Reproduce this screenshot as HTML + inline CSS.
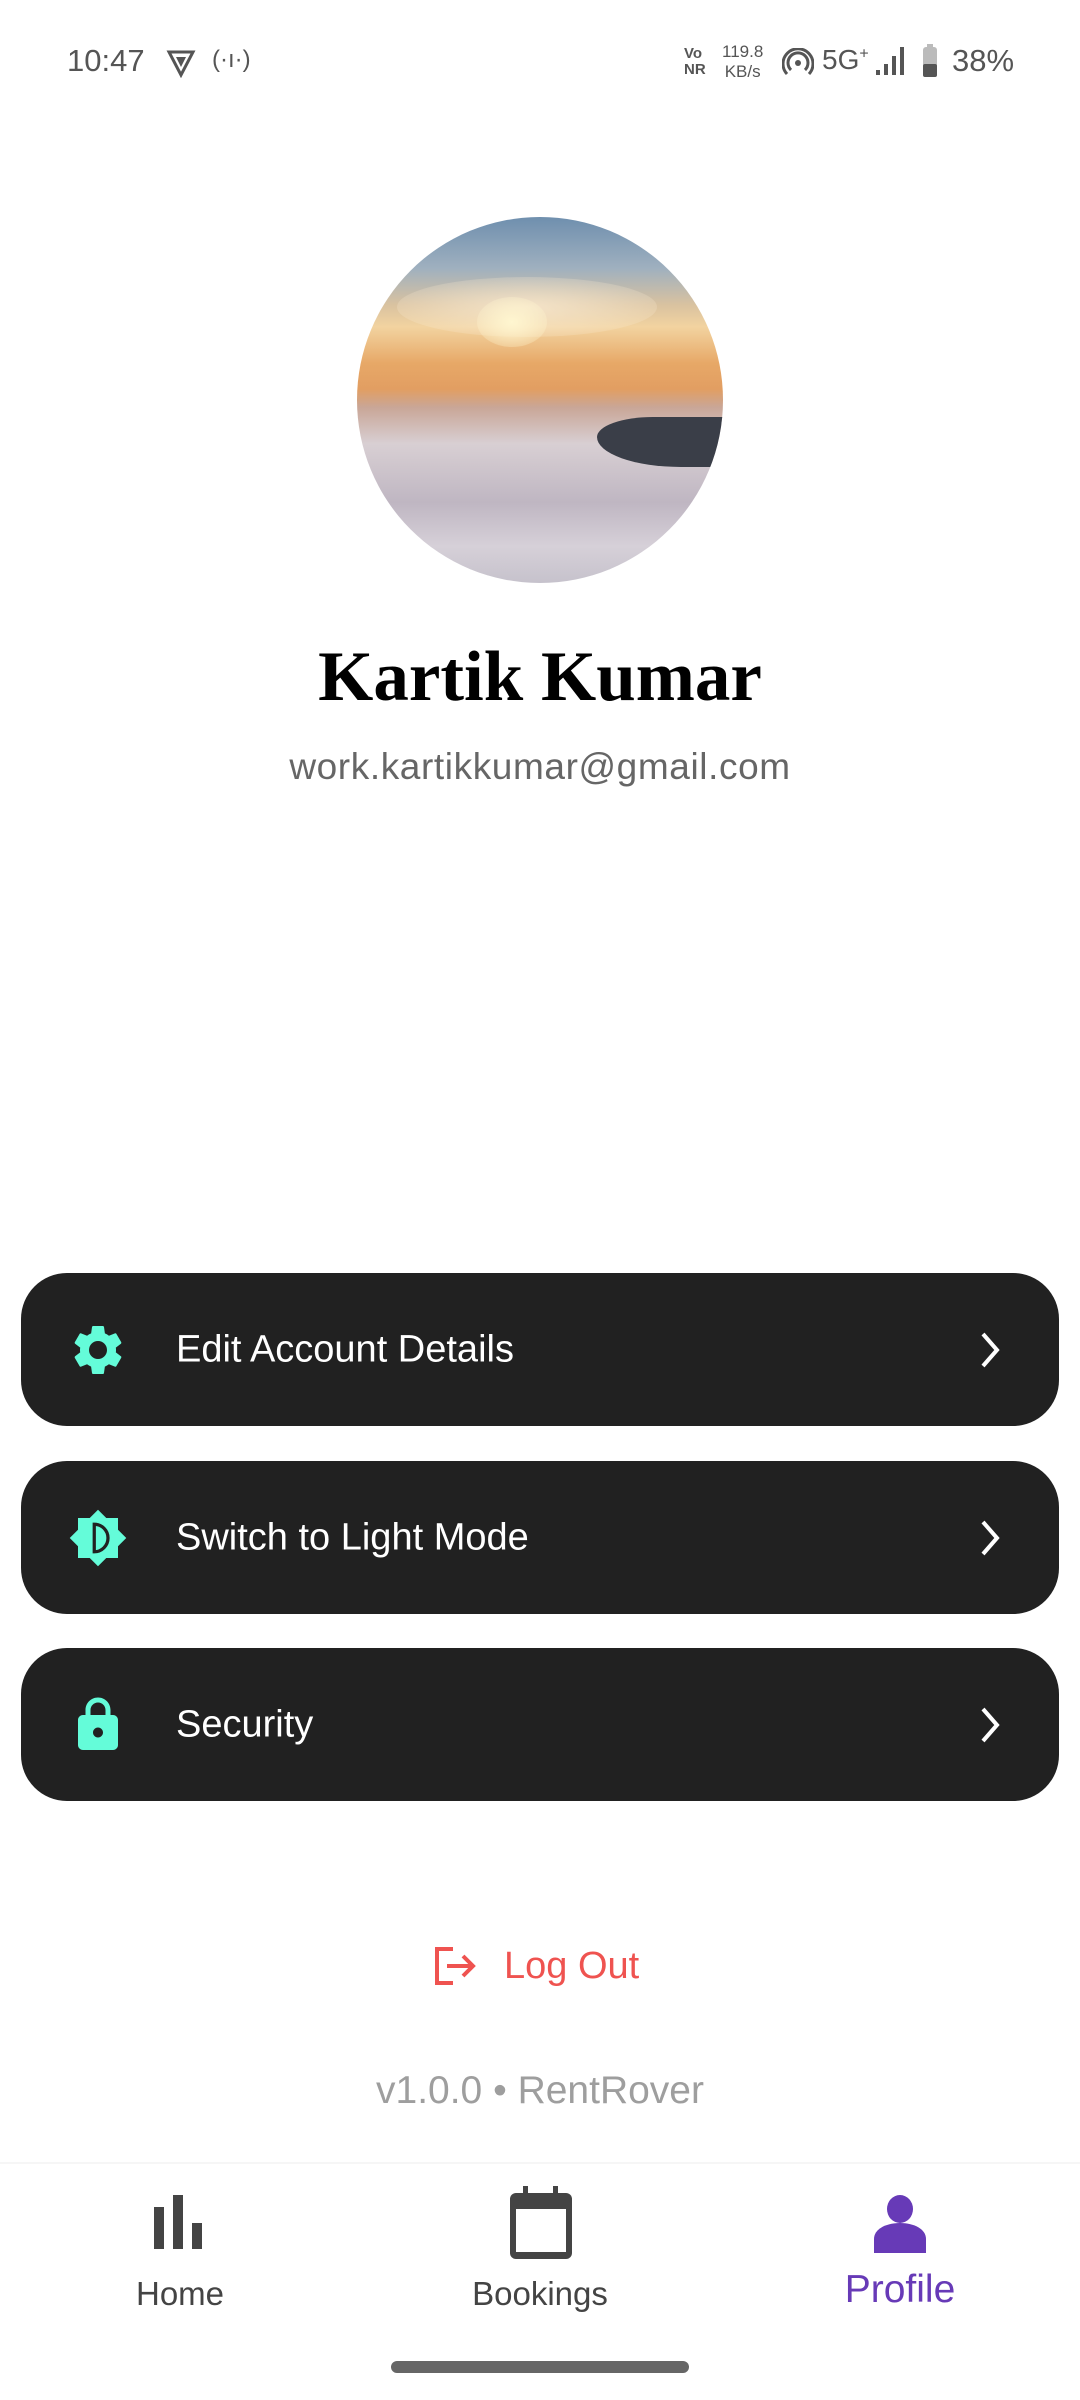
<!DOCTYPE html>
<html><head><meta charset="utf-8"><style>
*{margin:0;padding:0;box-sizing:border-box}
body{width:1080px;height:2400px;background:#fff;position:relative;overflow:hidden;font-family:"Liberation Sans",sans-serif}
.abs{position:absolute}
.card{position:absolute;left:21px;width:1038px;height:153px;background:#212121;border-radius:46px}
.card .t{position:absolute;left:155px;top:50%;transform:translateY(-50%);color:#fff;font-size:38px}
.card svg.ic{position:absolute;left:47px;top:50%;transform:translateY(-50%)}
.card svg.ch{position:absolute;left:954px;top:50%;transform:translateY(-50%)}
.lbl{position:absolute;font-size:33px;color:#444;transform:translateX(-50%)}
</style></head><body>
<div class="abs" style="left:67px;top:43px;font-size:31px;color:#555">10:47</div>
<svg class="abs" style="left:166px;top:48px" width="30" height="30" viewBox="0 0 30 30"><path d="M3 4h24L15 27z" fill="none" stroke="#555" stroke-width="3"/><path d="M10 9h10l-5 10z" fill="#555"/></svg>
<div class="abs" style="left:212px;top:46px;font-size:24px;color:#555">(·ı·)</div>
<div class="abs" style="left:684px;top:46px;font-size:15px;color:#555;line-height:16px;font-weight:bold">Vo<br>NR</div>
<div class="abs" style="left:722px;top:42px;font-size:17px;color:#555;line-height:20px;text-align:center">119.8<br>KB/s</div>
<svg class="abs" style="left:782px;top:48px" width="32" height="30" viewBox="0 0 32 30"><circle cx="16" cy="15" r="3" fill="#555"/><path d="M9 22a10 10 0 1 1 14 0M5 26a15 15 0 1 1 22 0" fill="none" stroke="#555" stroke-width="3"/></svg>
<div class="abs" style="left:822px;top:44px;font-size:28px;color:#555">5G<sup style="font-size:16px">+</sup></div>
<svg class="abs" style="left:874px;top:44px" width="34" height="32"><rect x="2" y="26" width="4" height="5" fill="#555"/><rect x="10" y="20" width="4" height="11" fill="#555"/><rect x="18" y="12" width="4" height="19" fill="#555"/><rect x="26" y="3" width="4" height="28" fill="#555"/></svg>
<svg class="abs" style="left:922px;top:44px" width="16" height="34"><rect x="1" y="3" width="14" height="30" rx="3" fill="#bbb"/><rect x="1" y="20" width="14" height="13" rx="2" fill="#555"/><rect x="5" y="0" width="6" height="4" fill="#bbb"/></svg>
<div class="abs" style="left:952px;top:43px;font-size:31px;color:#555">38%</div>

<div class="abs" style="left:357px;top:217px;width:366px;height:366px;border-radius:50%;overflow:hidden;background:linear-gradient(180deg,#6f8fae 0%,#9fb0bf 14%,#d9c2a0 24%,#f2d3a0 30%,#e7a867 40%,#e29e62 47%,#c9a697 52%,#d8cfd3 62%,#bfb6c2 78%,#d6d0d8 90%,#c6c2cc 100%)">
<div class="abs" style="left:40px;top:60px;width:260px;height:60px;border-radius:50%;background:radial-gradient(rgba(250,235,210,.8),rgba(250,235,210,0))"></div>
<div class="abs" style="left:120px;top:80px;width:70px;height:50px;border-radius:50%;background:radial-gradient(#fff6d0,rgba(255,240,200,0))"></div>
<div class="abs" style="left:240px;top:200px;width:140px;height:50px;border-radius:40% 0 0 60%;background:#3a3e48"></div>
</div>

<div class="abs" style="left:0;width:1080px;top:637px;text-align:center;font-family:'Liberation Serif',serif;font-weight:bold;font-size:71px;color:#000">Kartik Kumar</div>
<div class="abs" style="left:0;width:1080px;top:746px;text-align:center;font-size:37px;color:#666;letter-spacing:0.6px">work.kartikkumar@gmail.com</div>

<div class="card" style="top:1273px">
<svg class="ic" width="60" height="60" viewBox="0 0 24 24"><path fill="#64fcd9" d="M19.14 12.94c.04-.3.06-.61.06-.94s-.02-.64-.07-.94l2.03-1.58a.49.49 0 0 0 .12-.61l-1.920-3.32a.49.49 0 0 0-.59-.22l-2.39.96c-.5-.38-1.03-.7-1.62-.94l-.36-2.54a.48.48 0 0 0-.48-.41h-3.84c-.24 0-.43.17-.47.41l-.36 2.54c-.59.24-1.13.57-1.62.94l-2.39-.96a.49.49 0 0 0-.59.22L2.74 8.87c-.12.21-.08.47.12.61l2.03 1.58c-.05.3-.09.63-.09.94s.02.64.07.94l-2.03 1.58a.49.49 0 0 0-.12.61l1.92 3.32c.12.22.37.29.59.22l2.39-.96c.5.38 1.03.7 1.62.94l.36 2.54c.05.24.24.41.48.41h3.84c.24 0 .44-.17.47-.41l.36-2.54c.59-.24 1.130-.56 1.62-.94l2.39.96c.22.08.47 0 .59-.22l1.92-3.32c.12-.22.07-.47-.12-.61zM12 15.6A3.6 3.6 0 1 1 12 8.4a3.6 3.6 0 0 1 0 7.2z"/></svg>
<div class="t">Edit Account Details</div>
<svg class="ch" width="30" height="44" viewBox="0 0 30 44"><path d="M8 6l14 16L8 38" fill="none" stroke="#fff" stroke-width="4"/></svg>
</div>
<div class="card" style="top:1461px">
<svg class="ic" width="60" height="62" viewBox="0 0 24 24"><path fill="#64fcd9" d="M20 8.69V4h-4.69L12 .69 8.69 4H4v4.69L.69 12 4 15.31V20h4.69L12 23.31 15.31 20H20v-4.69L23.31 12z"/><path d="M10.5 6.5v11a5.5 5.5 0 0 0 0-11z" fill="none" stroke="#212121" stroke-width="1.3"/></svg>
<div class="t">Switch to Light Mode</div>
<svg class="ch" width="30" height="44" viewBox="0 0 30 44"><path d="M8 6l14 16L8 38" fill="none" stroke="#fff" stroke-width="4"/></svg>
</div>
<div class="card" style="top:1648px">
<svg class="ic" width="60" height="60" viewBox="0 0 24 24"><path fill="#64fcd9" d="M18 8h-1V6c0-2.76-2.24-5-5-5S7 3.24 7 6v2H6c-1.1 0-2 .9-2 2v10c0 1.1.9 2 2 2h12c1.1 0 2-.9 2-2V10c0-1.1-.9-2-2-2zm-6 9c-1.1 0-2-.9-2-2s.9-2 2-2 2 .9 2 2-.9 2-2 2zM9 8V6c0-1.66 1.34-3 3-3s3 1.34 3 3v2H9z"/></svg>
<div class="t">Security</div>
<svg class="ch" width="30" height="44" viewBox="0 0 30 44"><path d="M8 6l14 16L8 38" fill="none" stroke="#fff" stroke-width="4"/></svg>
</div>

<svg class="abs" style="left:433px;top:1946px" width="46" height="40" viewBox="0 0 46 40"><path d="M20 3H4v34h16" fill="none" stroke="#ef5350" stroke-width="4"/><path d="M14 20h26M30 10l10 10-10 10" fill="none" stroke="#ef5350" stroke-width="4"/></svg>
<div class="abs" style="left:504px;top:1945px;font-size:38px;color:#ef5350">Log Out</div>
<div class="abs" style="left:0;width:1080px;top:2069px;text-align:center;font-size:39px;color:#9e9e9e">v1.0.0 • RentRover</div>

<div class="abs" style="left:0;top:2162px;width:1080px;height:2px;background:#f6f6f6"></div>
<svg class="abs" style="left:152px;top:2195px" width="56" height="56"><rect x="2" y="12" width="10" height="42" fill="#444"/><rect x="21" y="0" width="10" height="54" fill="#444"/><rect x="40" y="28" width="10" height="26" fill="#444"/></svg>
<div class="lbl" style="left:180px;top:2275px">Home</div>
<svg class="abs" style="left:508px;top:2186px" width="66" height="76"><rect x="15" y="0" width="5" height="10" fill="#444"/><rect x="45" y="0" width="5" height="10" fill="#444"/><rect x="2" y="7" width="62" height="66" rx="6" fill="#444"/><rect x="8" y="23" width="50" height="43" fill="#fff"/></svg>
<div class="lbl" style="left:540px;top:2275px">Bookings</div>
<svg class="abs" style="left:872px;top:2195px" width="56" height="58"><ellipse cx="28" cy="14" rx="13" ry="14" fill="#673ab7"/><path d="M2 58V44c0-10 12-16 26-16s26 6 26 16v14z" fill="#673ab7"/></svg>
<div class="lbl" style="left:900px;top:2268px;color:#673ab7;font-size:39px">Profile</div>
<div class="abs" style="left:391px;top:2361px;width:298px;height:12px;border-radius:6px;background:#666"></div>
</body></html>
